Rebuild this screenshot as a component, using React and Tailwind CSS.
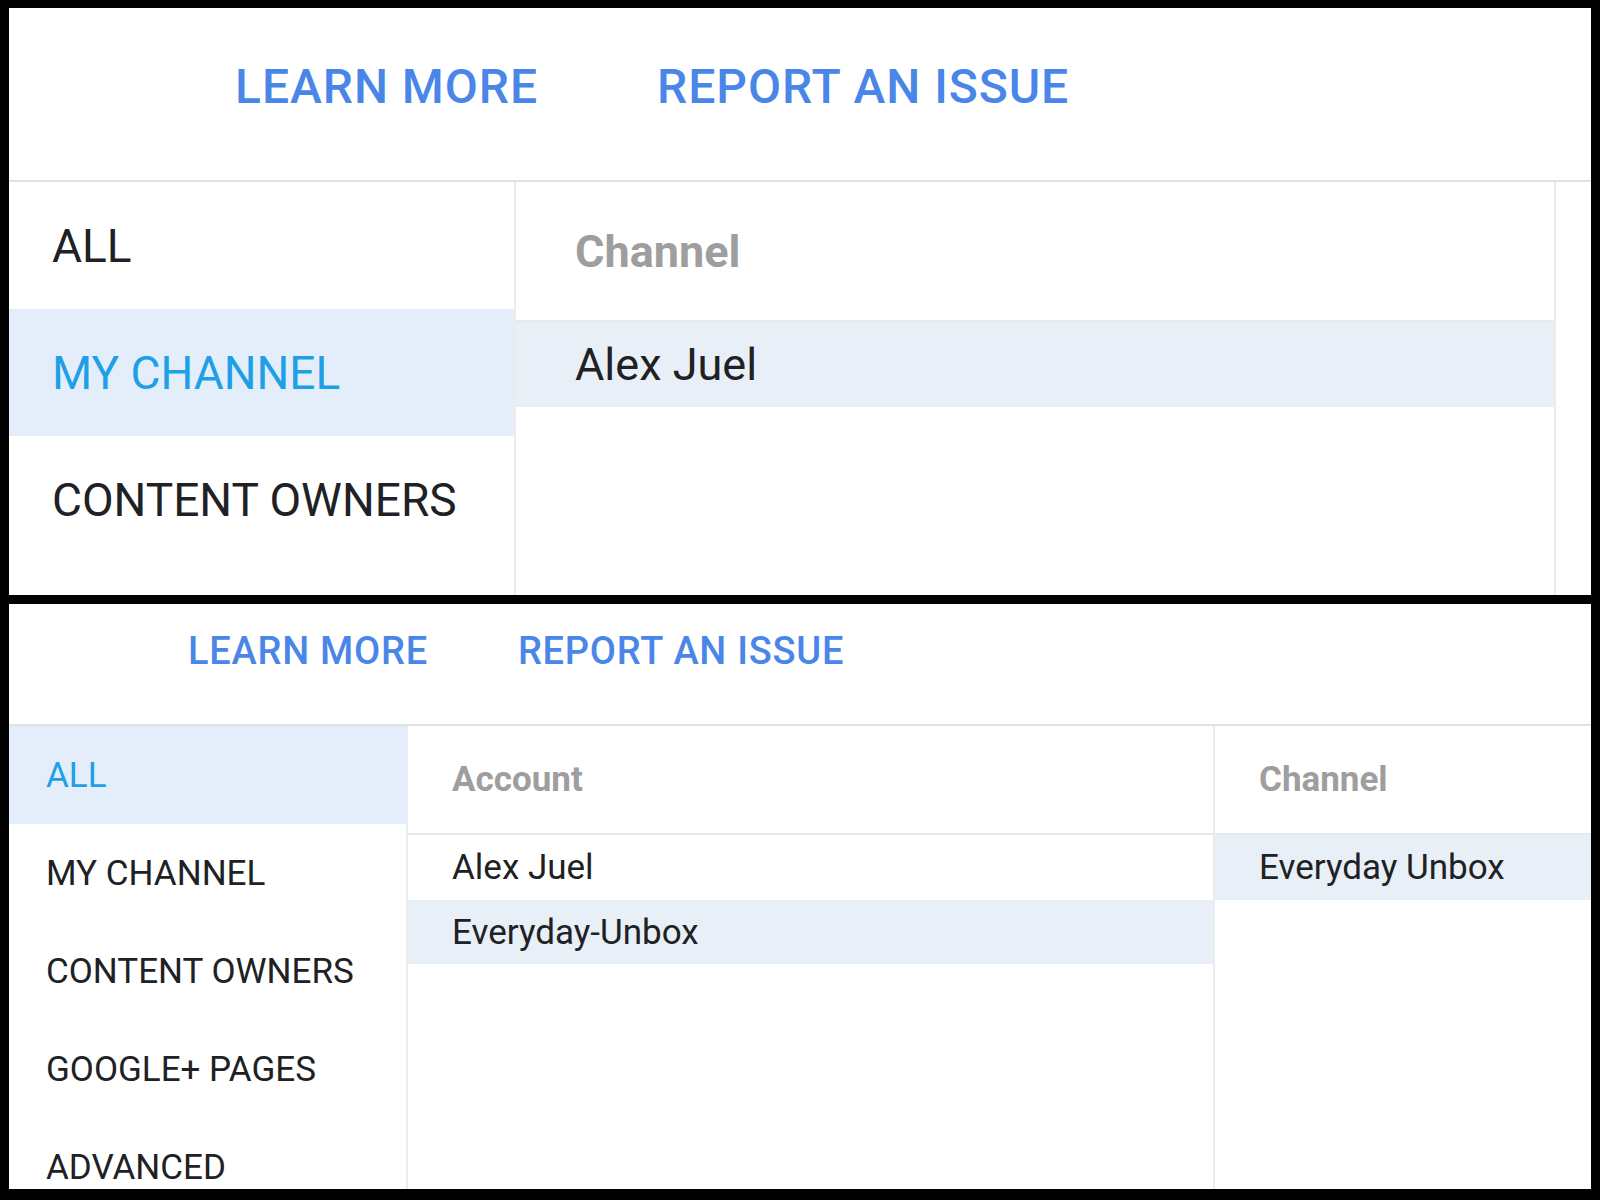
import React from 'react';

// Left filter tabs for each screenshot panel
const topTabs = ["ALL", "MY CHANNEL", "CONTENT OWNERS"];
const bottomTabs = ["ALL", "MY CHANNEL", "CONTENT OWNERS", "GOOGLE+ PAGES", "ADVANCED"];
const accounts = ["Alex Juel", "Everyday-Unbox"];

const font = "font-['Roboto','Liberation_Sans',sans-serif]";

const Links = ({ big }) => (
  <div
    className={
      big
        ? "h-[174px] flex items-start pt-[55px] pl-[226px] gap-[119px] border-b-2 border-[#e2e2e2]"
        : "h-[122px] flex items-start pt-[28px] pl-[179px] gap-[90px] border-b-2 border-[#e2e2e2]"
    }
  >
    <a className={big ? "text-[48px] leading-none font-medium tracking-[0.02em] text-[#4a86e8]" : "text-[38px] leading-none font-medium tracking-[0.02em] text-[#4a86e8]"}>
      LEARN MORE
    </a>
    <a className={big ? "text-[48px] leading-none font-medium tracking-[0.02em] text-[#4a86e8]" : "text-[38px] leading-none font-medium tracking-[0.02em] text-[#4a86e8]"}>
      REPORT AN ISSUE
    </a>
  </div>
);

const App = () => {
  return (
    <div className={`w-[1600px] h-[1200px] bg-black flex flex-col gap-[9px] pt-[8px] pb-[11px] px-[9px] ${font}`}>
      {/* Top screenshot: single channel */}
      <div className="h-[587px] bg-white flex flex-col overflow-hidden">
        <Links big />
        <div className="flex flex-1">
          <div className="w-[507px] border-r-2 border-[#ececec] flex flex-col">
            {topTabs.map((tab, i) => (
              <div
                key={tab}
                className={
                  i === 1
                    ? "h-[127px] flex items-center pl-[43px] text-[46px] leading-none bg-[#e3eefa] text-[#1f9fe6]"
                    : "h-[127px] flex items-center pl-[43px] text-[46px] leading-none text-[#202124]"
                }
              >
                {tab}
              </div>
            ))}
          </div>
          <div className="w-[1040px] border-r-2 border-[#ececec] flex flex-col">
            <div className="h-[140px] flex items-center pl-[59px] border-b-2 border-[#e6e9ec] text-[45px] leading-none font-bold text-[#9e9e9e]">
              Channel
            </div>
            <div className="h-[85px] flex items-center pl-[59px] bg-[#e8eff7] text-[45px] leading-none text-[#202124]">
              Alex Juel
            </div>
          </div>
          <div className="flex-1" />
        </div>
      </div>

      {/* Bottom screenshot: all accounts */}
      <div className="flex-1 bg-white flex flex-col overflow-hidden">
        <Links />
        <div className="flex flex-1 min-h-0">
          <div className="w-[399px] border-r-2 border-[#ececec] flex flex-col overflow-hidden">
            {bottomTabs.map((tab, i) => (
              <div
                key={tab}
                className={
                  i === 0
                    ? "h-[98px] shrink-0 flex items-center pl-[37px] text-[35px] leading-none bg-[#e3eefa] text-[#1f9fe6]"
                    : "h-[98px] shrink-0 flex items-center pl-[37px] text-[35px] leading-none text-[#202124]"
                }
              >
                {tab}
              </div>
            ))}
          </div>
          <div className="w-[807px] border-r-2 border-[#ececec] flex flex-col">
            <div className="h-[109px] flex items-center pl-[44px] border-b-2 border-[#e6e9ec] text-[35px] leading-none font-bold text-[#9e9e9e]">
              Account
            </div>
            {accounts.map((name, i) => (
              <div
                key={name}
                className={
                  i === 1
                    ? "h-[64px] flex items-center pl-[44px] bg-[#e8eff7] text-[35px] leading-none text-[#202124]"
                    : "h-[65px] flex items-center pl-[44px] text-[35px] leading-none text-[#202124]"
                }
              >
                {name}
              </div>
            ))}
          </div>
          <div className="flex-1 flex flex-col">
            <div className="h-[109px] flex items-center pl-[44px] border-b-2 border-[#e6e9ec] text-[35px] leading-none font-bold text-[#9e9e9e]">
              Channel
            </div>
            <div className="h-[65px] flex items-center pl-[44px] bg-[#e8eff7] text-[35px] leading-none text-[#202124]">
              Everyday Unbox
            </div>
          </div>
        </div>
      </div>
    </div>
  );
};

export default App;
